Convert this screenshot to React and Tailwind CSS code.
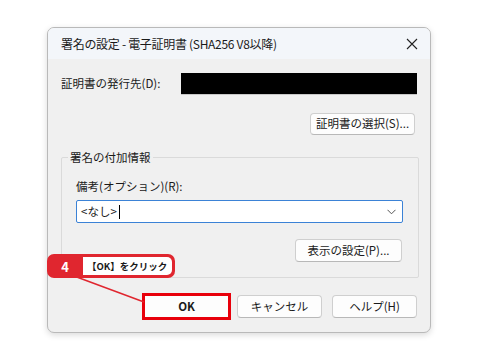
export default function App() {
  const font = { fontFamily: '"Noto Sans CJK JP", "Noto Sans", sans-serif' };

  return (
    <div className="relative w-[480px] h-[360px] bg-white overflow-hidden" style={font}>
      <div className="pl-[47px] pt-[27px]">
        {/* Dialog */}
        <div className="w-[384px] h-[306px] rounded-[7px] border border-[#b9b9b9] bg-[#f0f0f0] shadow-[0_2px_6px_rgba(0,0,0,0.15)] flex flex-col overflow-hidden">
          {/* Title bar */}
          <div className="h-[31px] bg-[#f3f6fa] flex items-center justify-between pl-[13px] pr-[12px] text-[12px] text-[#1a1a1a]">
            <span className="tracking-[-0.3px]">署名の設定 - 電子証明書 (SHA256 V8以降)</span>
            <svg width="12" height="12" viewBox="0 0 12 12">
              <path d="M1 1 L11 11 M11 1 L1 11" stroke="#222" strokeWidth="1.1" />
            </svg>
          </div>

          {/* Body */}
          <div className="flex-1 flex flex-col px-[13px] pt-[14px]">
            <div className="flex items-center h-[22px] text-[11.5px] text-[#1a1a1a]">
              <span className="w-[120px]">証明書の発行先(D):</span>
              <div className="w-[237px] h-[22px] bg-black border-b border-[#c8c8c8]"></div>
            </div>

            <div className="flex justify-end mt-[18px] pr-[2px]">
              <button className="w-[105px] h-[22px] bg-[#fdfdfd] border border-[#cfcfcf] border-b-[#b8b8b8] rounded-[4px] text-[11.5px] text-[#1a1a1a]">
                証明書の選択(S)...
              </button>
            </div>

            {/* Group box */}
            <div className="relative mt-[22px] w-[358px] h-[121px] border border-[#dadada] rounded-[2px]">
              <span className="absolute left-[6px] top-[-9px] bg-[#f0f0f0] px-[2px] text-[11.5px] text-[#1a1a1a] leading-[16px]">
                署名の付加情報
              </span>
              <div className="flex flex-col pl-[14px] pt-[20px]">
                <span className="text-[11.5px] text-[#1a1a1a] leading-[16px]">備考(オプション)(R):</span>
                <div className="mt-[6px] w-[327px] h-[23px] bg-white border border-[#3b82d6] rounded-[2px] flex items-center justify-between pl-[4px] pr-[6px]">
                  <div className="flex items-center text-[11.5px] text-[#1a1a1a]">
                    <span>&lt;なし&gt;</span>
                    <span className="w-px h-[14px] bg-black ml-[2px]"></span>
                  </div>
                  <svg width="9" height="6" viewBox="0 0 9 6">
                    <path d="M0.5 0.8 L4.5 4.8 L8.5 0.8" stroke="#555" strokeWidth="1" fill="none" />
                  </svg>
                </div>
                <div className="flex justify-end mt-[16px] pr-[16px]">
                  <button className="w-[107px] h-[23px] bg-[#fdfdfd] border border-[#cfcfcf] border-b-[#b8b8b8] rounded-[4px] text-[11.5px] text-[#1a1a1a]">
                    表示の設定(P)...
                  </button>
                </div>
              </div>
            </div>

            {/* Bottom buttons */}
            <div className="flex justify-end items-center mt-[15px]">
              <div className="flex w-[89px] h-[27px] border-[3px] border-[#e8000b] mr-[6px]">
                <button className="block w-full h-full bg-[#fdfdfd] text-[11.5px] font-bold text-[#1a1a1a]">
                  OK
                </button>
              </div>
              <button className="w-[85px] h-[23px] bg-[#fdfdfd] border border-[#cfcfcf] border-b-[#b8b8b8] rounded-[4px] text-[11.5px] text-[#1a1a1a] mr-[10px]">
                キャンセル
              </button>
              <button className="w-[85px] h-[23px] bg-[#fdfdfd] border border-[#cfcfcf] border-b-[#b8b8b8] rounded-[4px] text-[11.5px] text-[#1a1a1a]">
                ヘルプ(H)
              </button>
            </div>
          </div>
        </div>
      </div>

      {/* Callout line */}
      <svg className="absolute left-0 top-0" width="480" height="360">
        <line x1="74" y1="276" x2="144" y2="302" stroke="#e0262f" strokeWidth="1.5" />
      </svg>

      {/* Callout */}
      <div className="absolute left-[47px] top-[254px] w-[128px] h-[24px] bg-[#e0262f] rounded-[7px] flex items-center">
        <span className="w-[36px] text-center text-white font-bold text-[13px] leading-none">4</span>
        <div className="w-[89px] h-[18px] bg-white rounded-r-[5px] flex items-center pl-[4px] text-[9.5px] font-bold text-[#1a1a1a]">
          【OK】をクリック
        </div>
      </div>
    </div>
  );
}
